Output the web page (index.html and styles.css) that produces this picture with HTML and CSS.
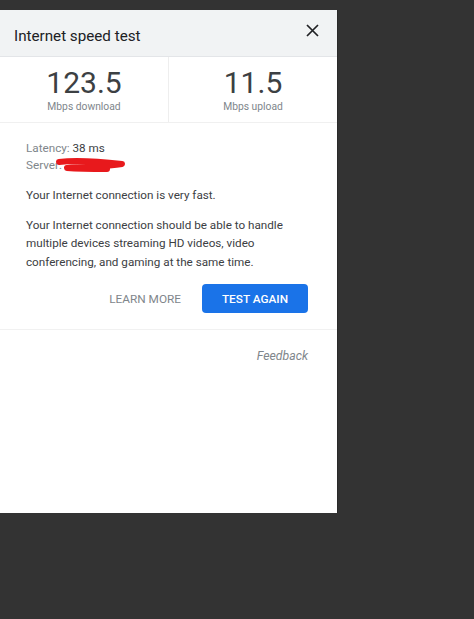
FILE: index.html
```html
<!DOCTYPE html>
<html>
    <head>
        <meta name="viewport" content="width=device-width, initial-scale=1">
        <link rel="stylesheet" href="styles.css">
    </head>
    <body>
        <div class="panel">
            <div class="header">
                <span class="title">Internet speed test</span>
                <svg class="close" width="13" height="13" viewBox="0 0 13 13">
                    <path d="M1 1L12 12M12 1L1 12" stroke="#202124" stroke-width="1.7"/>
                </svg>
            </div>
            <div class="stats">
                <div class="stat">
                    <div class="num">123.5</div>
                    <div class="unit">Mbps download</div>
                </div>
                <div class="stat">
                    <div class="num">11.5</div>
                    <div class="unit">Mbps upload</div>
                </div>
            </div>
            <div class="content">
                <div class="meta">
                    <div><span class="key">Latency:</span> 38 ms</div>
                    <div class="server"><span class="key">Server:</span>
                        <svg class="scribble" width="72" height="16" viewBox="0 0 72 16">
                            <path d="M4 4C20 2 40 3 67 6C50 9 30 8 12 10C25 11 40 11 52 11" stroke="#e8191c" stroke-width="6" fill="none" stroke-linecap="round" stroke-linejoin="round"/>
                        </svg>
                    </div>
                </div>
                <p>Your Internet connection is very fast.</p>
                <p>Your Internet connection should be able to handle multiple devices streaming HD videos, video conferencing, and gaming at the same time.</p>
                <div class="actions">
                    <button class="link">LEARN MORE</button>
                    <button class="primary">TEST AGAIN</button>
                </div>
            </div>
            <div class="footer">Feedback</div>
        </div>
    </body>
</html>
```

FILE: styles.css
```css
html, body { margin: 0; padding: 0; background-color: #333; }
body { padding-top: 10px; font-family: Roboto, "Liberation Sans", sans-serif; height: 609px; }

.panel {
    width: 337px;
    height: 503px;
    background: #fff;
    border-right: 1px solid #2a2a2a;
}

.header {
    height: 46px;
    background: #f1f3f4;
    border-bottom: 1px solid #e3e5e8;
    display: flex;
    align-items: center;
    justify-content: space-between;
    padding: 0 18px 0 14px;
}
.title { font-size: 15.2px; color: #202124; margin-top: 5px; }
.close { margin-top: -5px; }

.stats {
    display: flex;
    height: 65px;
    border-bottom: 1px solid #f0f0f0;
}
.stat {
    flex: 1;
    text-align: center;
    padding-top: 9px;
}
.stat:first-child { border-right: 1px solid #eeeeee; }
.num { font-size: 30px; color: #3c4043; line-height: 34px; }
.unit { font-size: 10.3px; color: #80868b; line-height: 13px; }

.content {
    padding: 17px 29px 16px 26px;
    border-bottom: 1px solid #f1f1f1;
    font-size: 11.7px;
    color: #3c4043;
    line-height: 18.5px;
}
.meta { line-height: 17px; }
.key { color: #80868b; }
.server { position: relative; }
.scribble {
    position: absolute;
    left: 29px;
    top: 1px;
}
p { margin: 11px 0 0; }
.meta + p { margin-top: 12px; }

.actions {
    display: flex;
    justify-content: flex-end;
    align-items: center;
    gap: 21px;
    margin-top: 13px;
}
button {
    font-family: Roboto, "Liberation Sans", sans-serif;
    font-size: 11.8px;
    border: none;
    background: none;
    padding: 0;
}
.link { color: #80868b; }
.primary {
    background: #1a73e8;
    color: #fff;
    font-weight: 500;
    width: 106px;
    height: 29px;
    border-radius: 4px;
}

.footer {
    text-align: right;
    padding: 19px 29px 0 0;
    font-size: 12.3px;
    font-style: italic;
    color: #80868b;
}
```
